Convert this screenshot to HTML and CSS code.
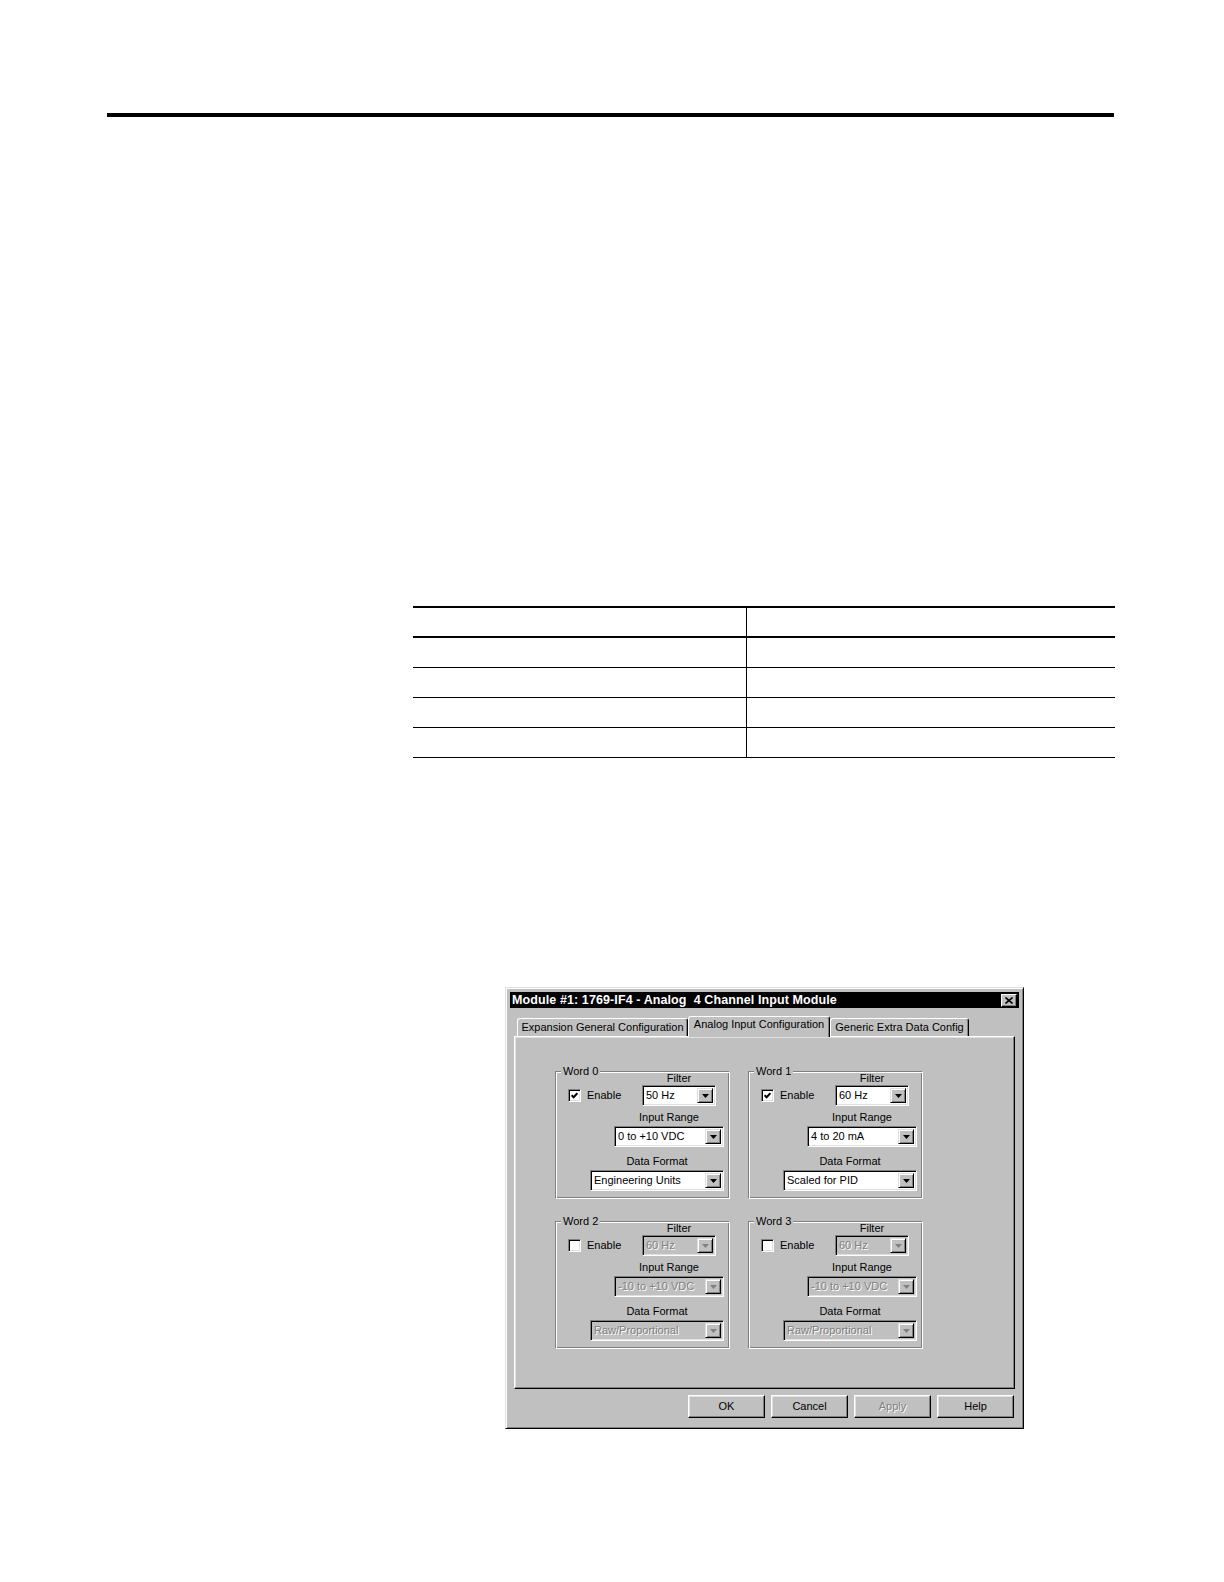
FILE: index.html
```html
<!DOCTYPE html>
<html>
<head>
<meta charset="utf-8">
<title>1769-IF4 Configuration</title>
<link rel="stylesheet" href="styles.css">
</head>
<body>
<div class="page">
  <div class="rule"></div>

  <div class="spec">
    <div class="spec-row spec-head"><div class="c1"></div><div class="c2"></div></div>
    <div class="spec-row"><div class="c1"></div><div class="c2"></div></div>
    <div class="spec-row"><div class="c1"></div><div class="c2"></div></div>
    <div class="spec-row"><div class="c1"></div><div class="c2"></div></div>
    <div class="spec-row"><div class="c1"></div><div class="c2"></div></div>
  </div>

  <div class="dialog">
    <div class="titlebar">
      <span class="title">Module #1: 1769-IF4 - Analog  4 Channel Input Module</span>
      <span class="close"><svg width="8" height="7" viewBox="0 0 8 7"><path d="M0.5 0.5L7.5 6.5M7.5 0.5L0.5 6.5" stroke="#000" stroke-width="1.6" fill="none"/></svg></span>
    </div>

    <div class="tabs">
      <div class="tab t1">Expansion General Configuration</div>
      <div class="tab t2 active">Analog Input Configuration</div>
      <div class="tab t3">Generic Extra Data Config</div>
    </div>

    <div class="panel">
      <div class="groups">
        <div class="group">
          <span class="legend">Word 0</span>
          <div class="row1">
            <div class="check"><span class="cb"><svg width="7" height="7" viewBox="0 0 7 7"><path d="M0.6 3.2L2.6 5.3L6.4 1.2" stroke="#000" stroke-width="2" fill="none"/></svg></span><span class="lbl">Enable</span></div>
            <div class="field f-filter"><span class="flabel">Filter</span><div class="combo w-filter"><span class="val">50 Hz</span><span class="arrow"><svg width="7" height="4" viewBox="0 0 7 4"><path d="M0 0H7L3.5 4Z"/></svg></span></div></div>
          </div>
          <div class="field f-range"><span class="flabel">Input Range</span><div class="combo w-range"><span class="val">0 to +10 VDC</span><span class="arrow"><svg width="7" height="4" viewBox="0 0 7 4"><path d="M0 0H7L3.5 4Z"/></svg></span></div></div>
          <div class="field f-format"><span class="flabel">Data Format</span><div class="combo w-format"><span class="val">Engineering Units</span><span class="arrow"><svg width="7" height="4" viewBox="0 0 7 4"><path d="M0 0H7L3.5 4Z"/></svg></span></div></div>
        </div>

        <div class="group">
          <span class="legend">Word 1</span>
          <div class="row1">
            <div class="check"><span class="cb"><svg width="7" height="7" viewBox="0 0 7 7"><path d="M0.6 3.2L2.6 5.3L6.4 1.2" stroke="#000" stroke-width="2" fill="none"/></svg></span><span class="lbl">Enable</span></div>
            <div class="field f-filter"><span class="flabel">Filter</span><div class="combo w-filter"><span class="val">60 Hz</span><span class="arrow"><svg width="7" height="4" viewBox="0 0 7 4"><path d="M0 0H7L3.5 4Z"/></svg></span></div></div>
          </div>
          <div class="field f-range"><span class="flabel">Input Range</span><div class="combo w-range"><span class="val">4 to 20 mA</span><span class="arrow"><svg width="7" height="4" viewBox="0 0 7 4"><path d="M0 0H7L3.5 4Z"/></svg></span></div></div>
          <div class="field f-format"><span class="flabel">Data Format</span><div class="combo w-format"><span class="val">Scaled for PID</span><span class="arrow"><svg width="7" height="4" viewBox="0 0 7 4"><path d="M0 0H7L3.5 4Z"/></svg></span></div></div>
        </div>

        <div class="group">
          <span class="legend">Word 2</span>
          <div class="row1">
            <div class="check"><span class="cb"></span><span class="lbl">Enable</span></div>
            <div class="field f-filter"><span class="flabel">Filter</span><div class="combo dis w-filter"><span class="val">60 Hz</span><span class="arrow"><svg width="7" height="4" viewBox="0 0 7 4"><path d="M0 0H7L3.5 4Z"/></svg></span></div></div>
          </div>
          <div class="field f-range"><span class="flabel">Input Range</span><div class="combo dis w-range"><span class="val">-10 to +10 VDC</span><span class="arrow"><svg width="7" height="4" viewBox="0 0 7 4"><path d="M0 0H7L3.5 4Z"/></svg></span></div></div>
          <div class="field f-format"><span class="flabel">Data Format</span><div class="combo dis w-format"><span class="val">Raw/Proportional</span><span class="arrow"><svg width="7" height="4" viewBox="0 0 7 4"><path d="M0 0H7L3.5 4Z"/></svg></span></div></div>
        </div>

        <div class="group">
          <span class="legend">Word 3</span>
          <div class="row1">
            <div class="check"><span class="cb"></span><span class="lbl">Enable</span></div>
            <div class="field f-filter"><span class="flabel">Filter</span><div class="combo dis w-filter"><span class="val">60 Hz</span><span class="arrow"><svg width="7" height="4" viewBox="0 0 7 4"><path d="M0 0H7L3.5 4Z"/></svg></span></div></div>
          </div>
          <div class="field f-range"><span class="flabel">Input Range</span><div class="combo dis w-range"><span class="val">-10 to +10 VDC</span><span class="arrow"><svg width="7" height="4" viewBox="0 0 7 4"><path d="M0 0H7L3.5 4Z"/></svg></span></div></div>
          <div class="field f-format"><span class="flabel">Data Format</span><div class="combo dis w-format"><span class="val">Raw/Proportional</span><span class="arrow"><svg width="7" height="4" viewBox="0 0 7 4"><path d="M0 0H7L3.5 4Z"/></svg></span></div></div>
        </div>
      </div>
    </div>

    <div class="buttons">
      <div class="btn">OK</div>
      <div class="btn">Cancel</div>
      <div class="btn disabled">Apply</div>
      <div class="btn">Help</div>
    </div>
  </div>
</div>
</body>
</html>
```

FILE: styles.css
```css
html, body {
  margin: 0;
  padding: 0;
  background: #fff;
}

body {
  font-family: "Liberation Sans", Arial, sans-serif;
  color: #000;
}

.page {
  width: 1224px;
  min-height: 1582px;
  overflow: hidden;
}

/* top heading rule */
.rule {
  margin: 113px 0 0 107px;
  width: 1007px;
  height: 4px;
  background: #000;
}

/* empty specification table */
.spec {
  margin: 489px 0 0 413px;
  width: 702px;
  border-top: 2px solid #000;
}

.spec-row {
  display: grid;
  grid-template-columns: 334px 1fr;
  height: 30px;
  box-sizing: border-box;
  border-bottom: 1px solid #000;
}

.spec-head {
  border-bottom-width: 2px;
}

.spec-row .c1 {
  border-right: 1px solid #000;
}

/* dialog window */
.dialog {
  margin: 229px 0 0 505px;
  width: 519px;
  height: 442px;
  box-sizing: border-box;
  background: #c0c0c0;
  border: 1px solid;
  border-color: #dfdfdf #000 #000 #dfdfdf;
  box-shadow: inset 1px 1px 0 #fff, inset -1px -1px 0 #808080;
  padding: 4px;
  display: flex;
  flex-direction: column;
  font-size: 11px;
}

.titlebar {
  height: 16px;
  flex: none;
  background: #000;
  color: #fff;
  display: flex;
  align-items: center;
  justify-content: space-between;
  padding: 0 2px 0 2px;
}

.title {
  font-weight: bold;
  font-size: 12.5px;
  white-space: pre;
  letter-spacing: 0.1px;
}

.close {
  width: 16px;
  height: 13px;
  box-sizing: border-box;
  background: #c0c0c0;
  border: 1px solid;
  border-color: #fff #000 #000 #fff;
  box-shadow: inset -1px -1px 0 #808080;
  display: flex;
  align-items: center;
  justify-content: center;
}

/* tabs */
.tabs {
  flex: none;
  margin-top: 8px;
  height: 20px;
  display: flex;
  align-items: flex-end;
  padding-left: 7px;
}

.tab {
  height: 18px;
  box-sizing: border-box;
  border: 1px solid;
  border-color: #fff #000 transparent #fff;
  border-bottom: none;
  border-radius: 3px 3px 0 0;
  box-shadow: inset -1px 0 0 #808080;
  background: #c0c0c0;
  font-size: 11px;
  line-height: 16px;
  text-align: center;
  white-space: nowrap;
}

.t1 { width: 171px; }
.t2 { width: 142px; }
.t3 { width: 139px; }

.tab.active {
  height: 21px;
  margin-bottom: -1px;
  position: relative;
  z-index: 1;
  line-height: 15px;
}

/* panel */
.panel {
  flex: none;
  margin: 0 4px;
  height: 353px;
  box-sizing: border-box;
  border: 1px solid;
  border-color: #fff #000 #000 #fff;
  box-shadow: inset -1px -1px 0 #808080, inset 1px 1px 0 #dfdfdf;
}

.groups {
  display: grid;
  grid-template-columns: 175px 175px;
  column-gap: 18px;
  row-gap: 22px;
  padding: 34px 0 0 40px;
}

.group {
  position: relative;
  width: 175px;
  height: 128px;
  box-sizing: border-box;
  border: 1px solid;
  border-color: #808080 #fff #fff #808080;
  box-shadow: inset 1px 1px 0 #fff, inset -1px -1px 0 #808080;
  padding: 0 5px 7px 0;
  display: flex;
  flex-direction: column;
  align-items: flex-end;
}

.legend {
  position: absolute;
  top: -7px;
  left: 5px;
  padding: 0 2px;
  background: #c0c0c0;
  line-height: 13px;
  font-size: 11px;
}

.row1 {
  width: 100%;
  display: flex;
  align-items: flex-end;
  justify-content: space-between;
}

.check {
  display: flex;
  align-items: center;
  margin: 0 0 4px 12px;
}

.cb {
  width: 13px;
  height: 13px;
  box-sizing: border-box;
  border: 1px solid;
  border-color: #808080 #fff #fff #808080;
  box-shadow: inset 1px 1px 0 #000, inset -1px -1px 0 #dfdfdf;
  background: #fff;
  display: flex;
  align-items: center;
  justify-content: center;
}

.lbl {
  margin-left: 6px;
  line-height: 13px;
}

.field {
  display: flex;
  flex-direction: column;
  align-items: center;
}

.flabel {
  line-height: 14px;
  white-space: nowrap;
}

.f-filter {
  margin-right: 8px;
}

.f-filter .flabel {
  line-height: 13px;
}

.f-range {
  margin-top: 4px;
}

.f-format {
  margin-top: 7px;
}

.f-range .combo,
.f-format .combo {
  margin-top: 2px;
}

.combo {
  display: flex;
  height: 21px;
  box-sizing: border-box;
  border: 1px solid;
  border-color: #808080 #fff #fff #808080;
  box-shadow: inset 1px 1px 0 #000, inset -1px -1px 0 #dfdfdf;
  background: #fff;
  padding: 2px;
}

.w-filter { width: 74px; }
.w-range { width: 110px; }
.w-format { width: 134px; }

.combo .val {
  flex: 1;
  min-width: 0;
  line-height: 15px;
  padding-left: 1px;
  white-space: nowrap;
  overflow: hidden;
}

.combo .arrow {
  flex: none;
  width: 16px;
  height: 15px;
  box-sizing: border-box;
  border: 1px solid;
  border-color: #dfdfdf #000 #000 #dfdfdf;
  box-shadow: inset 1px 1px 0 #fff, inset -1px -1px 0 #808080;
  background: #c0c0c0;
  display: flex;
  align-items: center;
  justify-content: center;
}

.combo .arrow svg path {
  fill: #000;
}

.combo.dis {
  background: #c0c0c0;
}

.combo.dis .val {
  color: #808080;
  text-shadow: 1px 1px 0 #fff;
}

.combo.dis .arrow svg path {
  fill: #808080;
}

/* buttons */
.buttons {
  flex: none;
  margin-top: 6px;
  display: flex;
  justify-content: flex-end;
  gap: 6px;
  padding-right: 5px;
}

.btn {
  width: 77px;
  height: 23px;
  box-sizing: border-box;
  background: #c0c0c0;
  border: 1px solid;
  border-color: #fff #000 #000 #fff;
  box-shadow: inset -1px -1px 0 #808080, inset 1px 1px 0 #dfdfdf;
  text-align: center;
  line-height: 21px;
  font-size: 11px;
}

.btn.disabled {
  color: #808080;
  text-shadow: 1px 1px 0 #fff;
}
```
